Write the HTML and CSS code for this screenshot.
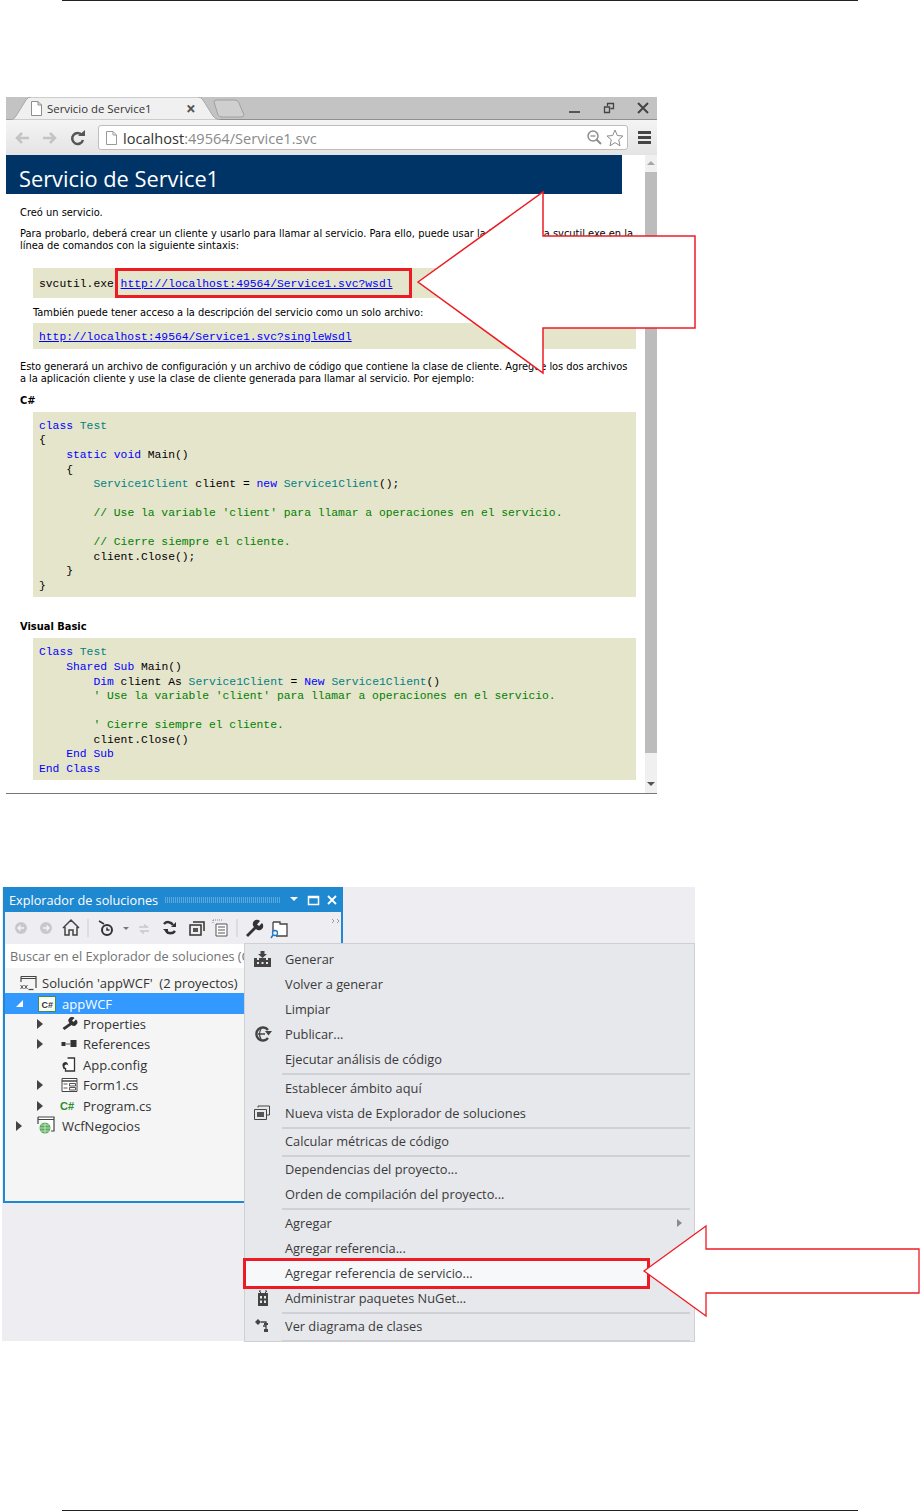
FILE: index.html
```html
<!DOCTYPE html>
<html lang="es">
<head>
  <meta charset="UTF-8">
  <title>Servicio de Service1</title>
  <link rel="stylesheet" href="styles.css">
</head>
<body>
<div class="sheet">
  <div class="top-rule"></div>

  <!-- primera captura: navegador -->
  <div class="browser">
    <div class="tabstrip">
      <svg class="tab-shape" width="240" height="23" viewBox="0 0 240 23">
        <path d="M0 23H4Q8 23 10 19L20 3Q22 0 25 0H192Q195 0 197 3L207 19Q209 22 214 23Z" fill="#f0f0f0" stroke="#a8a8a8"/>
        <path d="M208 5Q208 3 211 3H229Q232 3 233 6L238 18Q238 20 235 20H216Q213 20 212 18Z" fill="#cfcfcf" stroke="#a0a0a0"/>
      </svg>
      <svg class="tab-doc" width="11" height="15" viewBox="0 0 11 15"><path d="M.5.5H7L10.500 4V14.500H.5Z M7 .5V4H10.500" fill="#fff" stroke="#8d8d8d"/></svg>
      <span class="tab-title">Servicio de Service1</span>
      <span class="tab-close">×</span>
      <div class="winctrls">
        <svg width="12" height="12" viewBox="0 0 12 12"><path d="M0 10H11" stroke="#555" stroke-width="2"/></svg>
        <svg width="12" height="12" viewBox="0 0 12 12"><path d="M4.500 4V1.500H10.500V6.500H7.500M1.500 5H6.500V10.500H1.500Z" fill="none" stroke="#444" stroke-width="1.300"/></svg>
        <svg width="12" height="12" viewBox="0 0 12 12"><path d="M1 1L11 11M11 1L1 11" stroke="#444" stroke-width="2"/></svg>
      </div>
    </div>
    <div class="toolbar">
      <svg class="nav-ico" width="72" height="16" viewBox="0 0 72 16">
        <path d="M15 8H3M8 3L3 8L8 13" fill="none" stroke="#c4c4c4" stroke-width="2.500"/>
        <path d="M29 8H41M36 3L41 8L36 13" fill="none" stroke="#c4c4c4" stroke-width="2.500"/>
        <path d="M69 10A5.500 5.500 0 1 1 68 5" fill="none" stroke="#555" stroke-width="2.500"/>
        <path d="M64 6H71V0Z" fill="#555"/>
      </svg>
      <div class="omnibox">
        <svg width="11" height="14" viewBox="0 0 11 14"><path d="M.5.5H7L10.500 4V13.500H.5Z M7 .5V4H10.500" fill="#fff" stroke="#999"/></svg>
        <span class="url"><b>localhost</b>:49564/Service1.svc</span>
        <svg class="zoom-ico" width="15" height="15" viewBox="0 0 15 15"><circle cx="6" cy="6" r="5" fill="none" stroke="#8c8c8c" stroke-width="1.500"/><path d="M3.500 6H8.500" stroke="#8c8c8c" stroke-width="1.300"/><path d="M9.500 9.500L14 14" stroke="#8c8c8c" stroke-width="2"/></svg>
        <svg width="18" height="18" viewBox="0 0 18 18"><path d="M9 1L11.300 6.500L17 7L12.700 10.800L14 16.800L9 13.600L4 16.800L5.300 10.800L1 7L6.700 6.500Z" fill="#fff" stroke="#8c8c8c"/></svg>
      </div>
      <div class="hamburger"><i></i><i></i><i></i></div>
    </div>
    <div class="viewport">
      <div class="page">
        <div class="banner">Servicio de Service1</div>
        <p class="txt first">Creó un servicio.</p>
        <p class="txt para2">Para probarlo, deberá crear un cliente y usarlo para llamar al servicio. Para ello, puede usar la herramienta svcutil.exe en la<br>línea de comandos con la siguiente sintaxis:</p>
        <pre class="code short one">svcutil.exe <a href="#">http://localhost:49564/Service1.svc?wsdl</a></pre>
        <p class="txt indent">También puede tener acceso a la descripción del servicio como un solo archivo:</p>
        <pre class="code short two"><a href="#">http://localhost:49564/Service1.svc?singleWsdl</a></pre>
        <p class="txt para3">Esto generará un archivo de configuración y un archivo de código que contiene la clase de cliente. Agregue los dos archivos<br>a la aplicación cliente y use la clase de cliente generada para llamar al servicio. Por ejemplo:</p>
        <p class="txt lang">C#</p>
        <pre class="code block"><span class="kw">class</span> <span class="ty">Test</span>
{
    <span class="kw">static void</span> Main()
    {
        <span class="ty">Service1Client</span> client = <span class="kw">new</span> <span class="ty">Service1Client</span>();

        <span class="cm">// Use la variable 'client' para llamar a operaciones en el servicio.</span>

        <span class="cm">// Cierre siempre el cliente.</span>
        client.Close();
    }
}</pre>
        <p class="txt lang vb">Visual Basic</p>
        <pre class="code block"><span class="kw">Class</span> <span class="ty">Test</span>
    <span class="kw">Shared Sub</span> Main()
        <span class="kw">Dim</span> client As <span class="ty">Service1Client</span> = <span class="kw">New</span> <span class="ty">Service1Client</span>()
        <span class="cm">' Use la variable 'client' para llamar a operaciones en el servicio.</span>

        <span class="cm">' Cierre siempre el cliente.</span>
        client.Close()
    <span class="kw">End Sub</span>
<span class="kw">End Class</span></pre>
      </div>
      <div class="scrollbar">
        <span class="sb-up"></span>
        <div class="sb-thumb"></div>
        <span class="sb-down"></span>
      </div>
    </div>
    <div class="redbox"></div>
    <svg class="callout one" width="282" height="186" viewBox="0 0 282 186">
      <path d="M2 92L127 2V46H279V138H127V183Z" fill="#fff" stroke="#ed1c24" stroke-width="1.500"/>
    </svg>
  </div>

  <!-- segunda captura: Visual Studio -->
  <div class="vsshot">
    <div class="sol-panel">
      <div class="sol-title">
        <span>Explorador de soluciones</span>
        <i class="grip"></i>
        <svg width="52" height="12" viewBox="0 0 52 12">
          <path d="M1 3H9L5 7Z" fill="#fff"/>
          <path d="M19.500 2.500H29.500V10.500H19.500Z M19 3.500H30" fill="none" stroke="#fff" stroke-width="1.500"/>
          <path d="M39 2L47 10M47 2L39 10" stroke="#fff" stroke-width="1.800"/>
        </svg>
      </div>
      <div class="sol-tools">
        <svg width="336" height="24" viewBox="0 0 336 24">
          <g transform="translate(2)">
            <circle cx="14" cy="12" r="6" fill="#c8c8cc"/><path d="M11 12H17M13.500 9.500L11 12L13.500 14.500" fill="none" stroke="#f5f5f5" stroke-width="1.300"/>
            <circle cx="39" cy="12" r="6" fill="#c8c8cc"/><path d="M36 12H42M39.500 9.500L42 12L39.500 14.500" fill="none" stroke="#f5f5f5" stroke-width="1.300"/>
            <path d="M56 12L64 4L72 12M58 11V19H62V14H66V19H70V11" fill="none" stroke="#444" stroke-width="1.500"/>
          </g>
          <path d="M83 3V21" stroke="#ccc"/>
          <circle cx="102" cy="14" r="5" fill="none" stroke="#333" stroke-width="2"/><path d="M102 11.500V14H104.500M94 5L99 8" stroke="#333" stroke-width="1.500" fill="none"/>
          <path d="M118 11H124L121 14Z" fill="#777"/>
          <path d="M134 11H142L139 8.500M144 15H136L139 17.500" fill="none" stroke="#c8c8cc" stroke-width="1.500"/>
          <path d="M159 8A5.500 5.500 0 0 1 168 9M170 15A5.500 5.500 0 0 1 161 15" fill="none" stroke="#333" stroke-width="2.500"/><path d="M166 11H171V6ZM158 13H163V18Z" fill="#333"/>
          <path d="M185 9H196V19H185Z M188 6H199V15" fill="none" stroke="#333" stroke-width="1.500"/><path d="M188 12H193V16H188Z" fill="#555"/>
          <g transform="translate(-2)">
            <path d="M213 8H224V20H213Z" fill="#fff" stroke="#555"/><path d="M215 11H222M215 14H222M215 17H222" stroke="#555"/><path d="M210 4H220M210 4V7" stroke="#888" stroke-dasharray="1 1"/>
          </g>
          <path d="M232 3V21" stroke="#ccc"/>
          <path transform="translate(-5)" d="M246 19L254 11A4 4 0 0 1 260 5L257 8.500L259 10L262 7A4 4 0 0 1 256 13L248 21Z" fill="#333"/>
          <g transform="translate(-3)">
            <path d="M271 6H278V8H285V20H274" fill="#fff" stroke="#444" stroke-width="1.300"/><path d="M271 6V15" stroke="#444" stroke-width="1.300"/><circle cx="273" cy="17" r="2.500" fill="none" stroke="#1e78c2" stroke-width="1.300"/><path d="M271 19L269 22" stroke="#1e78c2" stroke-width="1.500"/>
          </g>
          <path d="M327 3L329 5L327 7M332 3L334 5L332 7" fill="none" stroke="#999"/>
        </svg>
      </div>
      <div class="sol-search">Buscar en el Explorador de soluciones (Ctrl+ñ)</div>
      <ul class="tree">
        <li class="lv0">
          <svg class="ico" width="18" height="16" viewBox="0 0 18 16"><path d="M1.500 1.500H16.500V13M1.500 1.500V7M1 3.500H16" fill="none" stroke="#444" stroke-width="1.200"/><path d="M9 14.500H14" stroke="#444" stroke-width="1.200"/><path d="M1 10L4 14M4 10L1 14M5 10L8 14M8 10L5 14" stroke="#555"/></svg>
          Solución 'appWCF'&nbsp; (2 proyectos)
        </li>
        <li class="lv1 sel">
          <span class="twist open"></span>
          <svg class="ico" width="19" height="16" viewBox="0 0 19 16"><rect x=".5" y=".5" width="17" height="15" fill="#f4fff4" stroke="#4c8a4c"/><path d="M3 3H15V13H3Z" fill="#fff"/><text x="3.500" y="11.500" class="cs-tag">C#</text></svg>
          appWCF
        </li>
        <li class="lv2">
          <span class="twist"></span>
          <svg class="ico" width="16" height="14" viewBox="0 0 16 14"><path d="M1 11L8 6A3.500 3.500 0 0 1 13 1L10.500 3.500L12 5L14.500 2.500A3.500 3.500 0 0 1 10 8L3 13Z" fill="#333"/></svg>
          Properties
        </li>
        <li class="lv2">
          <span class="twist"></span>
          <svg class="ico" width="16" height="14" viewBox="0 0 16 14"><path d="M0 5H4V9H0Z M9 3H15V10H9Z" fill="#333"/><path d="M4 7H9" stroke="#555"/></svg>
          References
        </li>
        <li class="lv2">
          <span class="twist none"></span>
          <svg class="ico" width="16" height="16" viewBox="0 0 16 16"><path d="M6 1H13V14H4V11" fill="#fff" stroke="#333" stroke-width="1.300"/><path d="M1 9A3 3 0 0 1 6 6L7 9A2 2 0 0 0 3 10L5 12H2Z" fill="#333"/></svg>
          App.config
        </li>
        <li class="lv2">
          <span class="twist"></span>
          <svg class="ico" width="16" height="14" viewBox="0 0 16 14"><path d="M.5.5H15.500V13.500H.5Z" fill="#fff" stroke="#444"/><path d="M.5 3H15.500" stroke="#444" stroke-width="1.500"/><path d="M2 6H6M2 10H6M8 5.500H14V8H8ZM8 9.500H14V12H8Z" fill="none" stroke="#555"/></svg>
          Form1.cs
        </li>
        <li class="lv2">
          <span class="twist"></span>
          <span class="ico cs-file">C#</span>
          Program.cs
        </li>
        <li class="lv0b">
          <span class="twist"></span>
          <svg class="ico" width="19" height="19" viewBox="0 0 19 19"><path d="M1 1H17V15H14M1 1V8M1 3.500H17" fill="#fff" stroke="#444" stroke-width="1.200"/><circle cx="8" cy="12" r="5.500" fill="#5aa85a"/><path d="M2.500 12H13.500M8 6.500V17.500M4 9H12M4 15H12" stroke="#d7efd7" stroke-width=".8"/></svg>
          WcfNegocios
        </li>
      </ul>
    </div>

    <div class="ctx-menu">
      <div class="mi">
        <svg class="mi-ico" width="17" height="16" viewBox="0 0 17 16"><path d="M6.500 0H10.500V3H13L8.500 7L4 3H6.500Z M0 7H3V9H5V7H12V9H14V7H17V16H0Z" fill="#444"/><path d="M3 11H5V13H3ZM7.500 11H9.500V13H7.500ZM12 11H14V13H12Z" fill="#e7e8ec"/></svg>
        Generar
      </div>
      <div class="mi">Volver a generar</div>
      <div class="mi">Limpiar</div>
      <div class="mi">
        <svg class="mi-ico" width="18" height="16" viewBox="0 0 18 16"><path d="M14 4A6.500 6.500 0 1 0 14 12" fill="none" stroke="#444" stroke-width="2.400"/><path d="M4 8H11M7 3Q4 8 7 13" fill="none" stroke="#444" stroke-width="1.300"/><path d="M11 5H18L14.500 9.500Z" fill="#444"/></svg>
        Publicar...
      </div>
      <div class="mi">Ejecutar análisis de código</div>
      <div class="sep"></div>
      <div class="mi">Establecer ámbito aquí</div>
      <div class="mi">
        <svg class="mi-ico" width="16" height="15" viewBox="0 0 16 15"><path d="M.5 4.500H12.500V14.500H.5Z" fill="#e7e8ec" stroke="#444"/><path d="M4 2.500V1H15.500V10H13" fill="none" stroke="#444"/><path d="M3 7H10V12H3Z" fill="#555"/></svg>
        Nueva vista de Explorador de soluciones
      </div>
      <div class="sep tight"></div>
      <div class="mi">Calcular métricas de código</div>
      <div class="sep tight"></div>
      <div class="mi">Dependencias del proyecto...</div>
      <div class="mi">Orden de compilación del proyecto...</div>
      <div class="sep"></div>
      <div class="mi">Agregar<span class="submenu"></span></div>
      <div class="mi">Agregar referencia...</div>
      <div class="mi hot">Agregar referencia de servicio...</div>
      <div class="mi">
        <svg class="mi-ico nuget" width="12" height="16" viewBox="0 0 12 16"><path d="M3 0V2M9 0V2M4 3L2 1M8 3L10 1" stroke="#444"/><path d="M1 3H11V16H1Z" fill="#444"/><path d="M3 6H5V8.500H3ZM7 6H9V8.500H7ZM3 10.500H5V13H3ZM7 10.500H9V13H7Z" fill="#e7e8ec"/></svg>
        Administrar paquetes NuGet...
      </div>
      <div class="sep tight"></div>
      <div class="mi">
        <svg class="mi-ico" width="17" height="15" viewBox="0 0 17 15"><path d="M1 4L4 1L7 4L4 7Z" fill="#444"/><path d="M7 4H12V12M12 8H9" fill="none" stroke="#444" stroke-width="1.300"/><path d="M10 5H14V7H10ZM10 11H14V14H10Z" fill="#444"/></svg>
        Ver diagrama de clases
      </div>
      <div class="sep"></div>
    </div>

    <div class="redbox hot-box"></div>
    <svg class="callout two" width="282" height="96" viewBox="0 0 282 96">
      <path d="M2 47L64 2V25H277V69H64V92Z" fill="#fff" stroke="#ed1c24" stroke-width="1.300"/>
    </svg>
  </div>

  <div class="bottom-rule"></div>
</div>
</body>
</html>
```

FILE: styles.css
```css
html, body {
  margin: 0;
  padding: 0;
  background: #fff;
}
.sheet {
  width: 921px;
  height: 1512px;
  overflow: hidden;
}
.top-rule {
  height: 1px;
  margin: 0 63px 0 62px;
  background: #222;
}
.bottom-rule {
  height: 1px;
  margin: 169px 63px 0 62px;
  background: #222;
}

/* navegador */
.browser {
  position: relative;
  width: 651px;
  margin: 96px 0 0 6px;
  border-bottom: 1px solid #777;
}
.tabstrip {
  position: relative;
  display: flex;
  align-items: center;
  height: 23px;
  background: #c3c3c3;
  border-bottom: 1px solid #8f8f8f;
  box-sizing: border-box;
  font-family: "Open Sans", sans-serif;
}
.tab-shape {
  position: absolute;
  left: 0;
  top: 0;
}
.tab-doc {
  position: relative;
  margin-left: 25px;
}
.tab-title {
  position: relative;
  width: 137px;
  margin-left: 5px;
  font-size: 11.400px;
  color: #333;
  white-space: nowrap;
}
.tab-close {
  position: relative;
  font-size: 17px;
  font-weight: bold;
  color: #555;
  margin-left: 2px;
}
.winctrls {
  display: flex;
  gap: 22px;
  margin-left: auto;
  margin-right: 8px;
}
.toolbar {
  display: flex;
  align-items: center;
  height: 35px;
  background: linear-gradient(#f4f4f4, #e4e4e4);
  box-sizing: border-box;
  padding: 0 6px 0 8px;
}
.nav-ico {
  flex: none;
}
.omnibox {
  display: flex;
  align-items: center;
  flex: none;
  width: 530px;
  height: 25px;
  margin-left: 12px;
  padding: 0 3px 0 7px;
  box-sizing: border-box;
  background: #fff;
  border: 1px solid #bdbdbd;
  border-radius: 3px;
  font-family: "Open Sans", sans-serif;
}
.url {
  margin-left: 6px;
  font-size: 14.600px;
  color: #8a8a8a;
  flex: 1;
}
.url b {
  font-weight: normal;
  color: #333;
}
.zoom-ico {
  margin-right: 4px;
}
.hamburger {
  display: flex;
  flex-direction: column;
  gap: 2px;
  margin-left: 10px;
}
.hamburger i {
  display: block;
  width: 13px;
  height: 3px;
  background: #444;
}
.viewport {
  display: flex;
  height: 638px;
  background: #fff;
}
.page {
  width: 639px;
  font-family: "DejaVu Sans", sans-serif;
  font-size: 9.900px;
  color: #000;
}
.banner {
  width: 603px;
  height: 39px;
  padding-left: 13px;
  background: #003366;
  color: #fff;
  font-family: "Open Sans", sans-serif;
  font-size: 21.800px;
  line-height: 47px;
  overflow: hidden;
}
.txt {
  margin: 0 0 0 14px;
  line-height: 12px;
  white-space: nowrap;
}
.first { margin-top: 13px; }
.para2 { margin-top: 9px; }
.indent {
  margin: 9px 0 0 27px;
  letter-spacing: -.05px;
}
.para3 {
  margin-top: 12px;
  letter-spacing: -.065px;
}
.lang {
  margin-top: 10px;
  font-weight: bold;
}
.lang.vb { margin-top: 24px; }
.code {
  margin: 5px 9px 0 27px;
  padding: 7px 6px 4px;
  background: #e5e5cc;
  font-family: "Liberation Mono", monospace;
  font-size: 11.330px;
  line-height: 14.550px;
  color: #000;
}
.code a {
  color: #0000ff;
  text-decoration: underline;
}
.code.short.one {
  margin-top: 16px;
  padding: 8.700px 6px 6.700px;
}
.code.short.two {
  margin-top: 4px;
  padding: 7px 6px 4.400px;
}
.kw { color: #0000ff; }
.ty { color: #007f7f; }
.cm { color: #008000; }
.scrollbar {
  display: flex;
  flex-direction: column;
  align-items: stretch;
  width: 12px;
  background: #f0f0f0;
}
.sb-up, .sb-down {
  display: block;
  width: 0;
  height: 0;
  margin: 6px auto 4px;
  border-left: 4px solid transparent;
  border-right: 4px solid transparent;
}
.sb-up { border-bottom: 4px solid #a6a6a6; margin-bottom: 7px; }
.sb-down { border-top: 4px solid #555; margin: 29px auto 0; }
.sb-thumb {
  height: 581px;
  background: #bcbcbc;
}

.redbox {
  position: absolute;
  left: 109px;
  top: 171px;
  width: 291px;
  height: 24px;
  border: 3px solid #ed1c24;
}
.callout {
  position: absolute;
}
.callout.one {
  left: 410px;
  top: 93px;
}

/* Visual Studio */
.vsshot {
  position: relative;
  width: 693px;
  height: 454px;
  margin: 93px 0 0 2px;
  background: #eeeef2;
  font-family: "Open Sans", sans-serif;
  filter: blur(.35px);
}
.sol-panel {
  width: 336px;
  height: 314px;
  margin-left: 1px;
  border: 2px solid #1e88d0;
  border-top: 0;
  background: #f5f5f5;
  overflow: hidden;
  box-sizing: content-box;
}
.sol-title {
  display: flex;
  align-items: center;
  height: 25px;
  padding-left: 4px;
  background: #1e88d0;
  color: #fff;
  font-size: 12.700px;
  white-space: nowrap;
}
.grip {
  flex: 1;
  height: 6px;
  margin: 0 8px 0 7px;
  background: repeating-linear-gradient(90deg, #5aaae0 0 1px, transparent 1px 2px);
}
.sol-tools {
  height: 32px;
  display: flex;
  align-items: center;
  background: #eeeef2;
}
.sol-search {
  height: 24px;
  line-height: 24px;
  padding-left: 5px;
  background: #fff;
  font-size: 12.700px;
  color: #717171;
  white-space: nowrap;
}
.tree {
  list-style: none;
  margin: 5px 0 0;
  padding: 0;
  font-size: 13px;
  color: #333;
}
.tree li {
  display: flex;
  align-items: center;
  height: 20.400px;
  white-space: nowrap;
}
.tree .sel {
  background: #3399ff;
  color: #fff;
}
.tree .ico {
  flex: none;
  width: 19px;
  margin-right: 4px;
}
.tree .sel .ico { margin-right: 5px; }
.tree .lv0b .ico { margin-right: 6px; }
.lv0 { padding-left: 14px; }
.lv1 { padding-left: 11px; }
.lv2 { padding-left: 32px; }
.lv0b { padding-left: 11px; }
.twist {
  flex: none;
  width: 0;
  height: 0;
  margin-right: 15px;
  border-left: 6px solid #444;
  border-top: 5px solid transparent;
  border-bottom: 5px solid transparent;
}
.lv2 .twist { margin-right: 17px; }
.twist.open {
  border-left: 7px solid transparent;
  border-top: 0;
  border-bottom: 7px solid #fff;
  margin-right: 15px;
}
.twist.none {
  border-left-color: transparent;
}
.cs-tag {
  font-family: "Liberation Sans", sans-serif;
  font-size: 9px;
  font-weight: bold;
  fill: #333;
}
.cs-file {
  font-family: "Liberation Sans", sans-serif;
  font-size: 11px;
  font-weight: bold;
  color: #2a8f2a;
}

.ctx-menu {
  position: absolute;
  left: 242px;
  top: 56px;
  width: 451px;
  height: 399px;
  box-sizing: border-box;
  padding-top: 3px;
  background: #e7e8ec;
  border: 1px solid #cfd0d6;
  font-size: 12.800px;
  color: #3a3a3a;
  overflow: hidden;
}
.mi {
  position: relative;
  height: 25px;
  line-height: 25px;
  padding-left: 40px;
  white-space: nowrap;
}
.mi.hot {
  background: #f7f8fa;
  margin-left: -1px;
  padding-left: 41px;
  margin-right: 46px;
}
.mi-ico {
  position: absolute;
  left: 9px;
  top: 4px;
}
.mi-ico.nuget {
  left: 12px;
}
.sep {
  height: 2px;
  margin: 1px 4px 1px 37px;
  background: #d0d1d7;
}
.sep.tight {
  margin-bottom: 0;
}
.submenu {
  position: absolute;
  right: 12px;
  top: 8px;
  width: 0;
  height: 0;
  border-left: 5px solid #8a8a8a;
  border-top: 4px solid transparent;
  border-bottom: 4px solid transparent;
}
.hot-box {
  left: 241px;
  top: 371px;
  width: 401px;
  height: 25px;
}
.callout.two {
  left: 640px;
  top: 337px;
}
```
